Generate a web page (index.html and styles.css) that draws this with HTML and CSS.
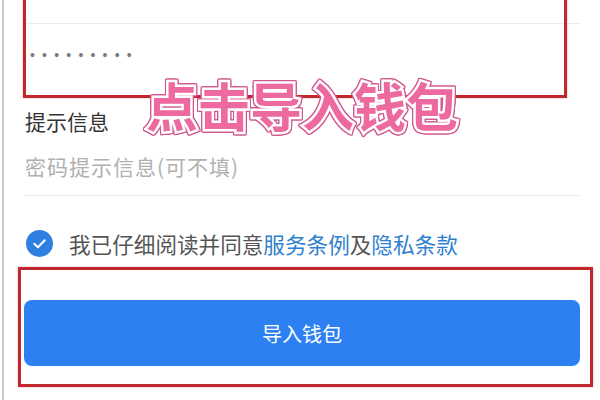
FILE: index.html
```html
<!DOCTYPE html>
<html lang="zh-CN">
<head>
  <meta charset="utf-8">
  <meta name="viewport" content="width=device-width, initial-scale=1">
  <title>导入钱包</title>
  <link rel="stylesheet" href="styles.css">
</head>
<body>
  <main class="screen">
    <div class="prev-field"></div>

    <div class="pwd-input">
      <span class="pwd-dots">•••••••••</span>
    </div>

    <div class="hint-group">
      <label class="field-label">提示信息</label>
      <div class="field-input placeholder">密码提示信息(可不填)</div>
    </div>

    <div class="agree-row">
      <svg class="check-icon" width="27" height="27" viewBox="0 0 27 27">
        <circle cx="13.5" cy="13.5" r="13.5" fill="#2e7fe0"/>
        <path d="M8.2 13.8 L11.9 17.3 L18.8 10.2" fill="none" stroke="#fff" stroke-width="2" stroke-linecap="round" stroke-linejoin="round"/>
      </svg>
      <span class="agree-text">我已仔细阅读并同意<a class="link">服务条例</a>及<a class="link">隐私条款</a></span>
    </div>

    <button class="submit-button">导入钱包</button>
  </main>

  <!-- annotation overlays -->
  <div class="mark mark-top"></div>
  <div class="mark mark-bottom"></div>
  <div class="caption">点击导入钱包</div>
</body>
</html>
```

FILE: styles.css
```css
:root {
  --primary-color: #2c80f2;
  --link-color: #2f7fcf;
  --text-color: #333333;
  --muted-color: #b0b0b0;
  --line-color: #ececec;
  --mark-color: #c1272d;
}

* {
  margin: 0;
  padding: 0;
  box-sizing: border-box;
}

body {
  width: 600px;
  height: 400px;
  overflow: hidden;
  position: relative;
  background: #fff;
  font-family: "Noto Sans CJK SC", "Noto Sans", sans-serif;
}

.screen {
  height: 400px;
  margin-left: 2px;
  border-left: 2px solid #c9c9c9;
  padding: 0 20px 0 20px;
  display: flex;
  flex-direction: column;
}

.prev-field {
  height: 24px;
  border-bottom: 1px solid var(--line-color);
  margin-left: 1px;
}

.pwd-input {
  height: 62px;
  display: flex;
  align-items: center;
  padding-left: 6px;
}

.pwd-dots {
  font-family: "Liberation Sans", sans-serif;
  font-size: 14px;
  letter-spacing: 7.2px;
  color: #7a7a7a;
}

.hint-group {
  margin-top: 20px;
  border-bottom: 1px solid var(--line-color);
  padding-bottom: 14px;
  margin-left: 1px;
}

.field-label {
  display: block;
  font-size: 21px;
  line-height: 30px;
  color: var(--text-color);
}

.field-input {
  margin-top: 15px;
  font-size: 21px;
  line-height: 30px;
  letter-spacing: 1px;
}

.placeholder {
  color: var(--muted-color);
}

.agree-row {
  margin-top: 33px;
  height: 28px;
  display: flex;
  align-items: center;
  gap: 16px;
  padding-left: 2px;
}

.check-icon {
  flex-shrink: 0;
}

.agree-text {
  font-size: 21.6px;
  color: #555;
}

.link {
  color: var(--link-color);
  text-decoration: none;
}

.submit-button {
  margin-top: 43px;
  height: 66px;
  width: 556px;
  border: none;
  border-radius: 8px;
  background-color: var(--primary-color);
  color: #fff;
  font-family: inherit;
  font-size: 20px;
  cursor: pointer;
}

.mark {
  position: absolute;
  border: 3px solid var(--mark-color);
  box-shadow: 0 0 2px rgba(230, 90, 90, 0.5);
}

.mark-top {
  left: 23px;
  top: -10px;
  width: 544px;
  height: 108px;
}

.mark-bottom {
  left: 18px;
  top: 267px;
  width: 575px;
  height: 120px;
}

.caption {
  position: absolute;
  left: 146px;
  top: 79px;
  font-size: 52px;
  line-height: 1;
  font-weight: 700;
  color: #ec6aa0;
  -webkit-text-stroke: 5px #fff;
  paint-order: stroke fill;
  filter: drop-shadow(1px 0 0 #d0558c) drop-shadow(-1px 0 0 #d0558c) drop-shadow(0 1px 0 #d0558c) drop-shadow(0 -1px 0 #d0558c);
}
```
